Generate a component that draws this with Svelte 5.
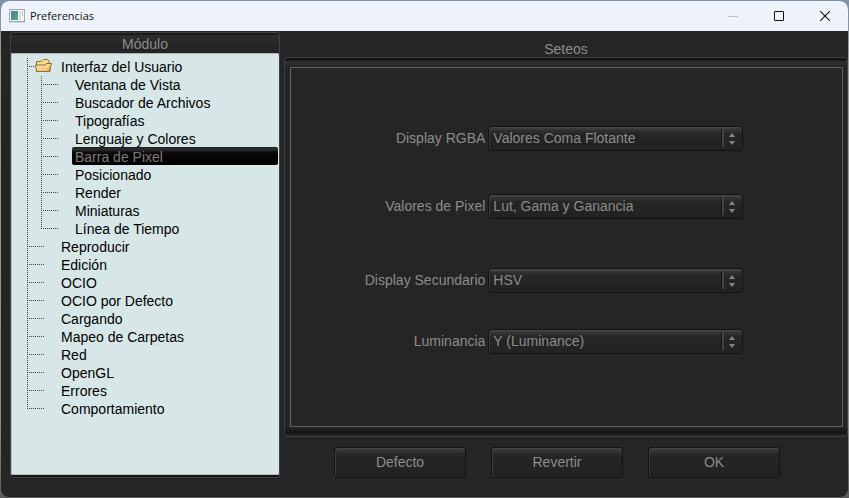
<script>
  const modules = [
    {
      name: 'Interfaz del Usuario',
      children: [
        'Ventana de Vista',
        'Buscador de Archivos',
        'Tipografías',
        'Lenguaje y Colores',
        'Barra de Pixel',
        'Posicionado',
        'Render',
        'Miniaturas',
        'Línea de Tiempo'
      ]
    },
    { name: 'Reproducir' },
    { name: 'Edición' },
    { name: 'OCIO' },
    { name: 'OCIO por Defecto' },
    { name: 'Cargando' },
    { name: 'Mapeo de Carpetas' },
    { name: 'Red' },
    { name: 'OpenGL' },
    { name: 'Errores' },
    { name: 'Comportamiento' }
  ];

  const fields = [
    { id: 'rgba', label: 'Display RGBA', value: 'Valores Coma Flotante' },
    { id: 'values', label: 'Valores de Pixel', value: 'Lut, Gama y Ganancia' },
    { id: 'secondary', label: 'Display Secundario', value: 'HSV' },
    { id: 'luminance', label: 'Luminancia', value: 'Y (Luminance)' }
  ];

  let selected = $state('Barra de Pixel');
</script>

<div class="desktop">
  <div class="window">
    <header>
      <svg class="app" width="16" height="14" viewBox="0 0 16 14" aria-hidden="true">
        <defs>
          <linearGradient id="screen" x1="0" y1="0" x2="1" y2="1">
            <stop offset="0" stop-color="#4b79a8" />
            <stop offset="1" stop-color="#4fae7c" />
          </linearGradient>
        </defs>
        <rect x="0.5" y="0.5" width="15" height="12" fill="#f3f4f5" stroke="#a3a8ad" />
        <path d="M0 13.5H16" stroke="#d0d3d8" />
        <rect x="2" y="2" width="7" height="9" fill="url(#screen)" />
        <rect x="10" y="2" width="2" height="9" fill="#dcdfe2" />
        <rect x="13" y="2" width="1" height="5" fill="#c6cbd0" />
      </svg>
      <h1>Preferencias</h1>
      <button class="caption" aria-label="Minimizar" disabled>
        <svg width="10" height="10" viewBox="0 0 10 10"><path d="M0 5.5H10" stroke="#bcc0c6" /></svg>
      </button>
      <button class="caption" aria-label="Maximizar">
        <svg width="10" height="10" viewBox="0 0 10 10"><rect x="0.5" y="0.5" width="9" height="9" rx="0.5" fill="none" stroke="#111" /></svg>
      </button>
      <button class="caption" aria-label="Cerrar">
        <svg width="10" height="10" viewBox="0 0 10 10"><path d="M0 0L10 10M10 0L0 10" stroke="#111" stroke-width="1.1" /></svg>
      </button>
    </header>

    <div class="body">
      <nav aria-label="Módulo">
        <h2>Módulo</h2>
        <ul class="tree">
          {#each modules as item}
            <li>
              <div class="row">
                <span class="branch" class:parent={item.children}>
                  {#if item.children}
                    <svg width="17" height="14" viewBox="0 0 17 14" aria-hidden="true">
                      <defs>
                        <linearGradient id="folder" x1="0" y1="0" x2="1" y2="1">
                          <stop offset="0" stop-color="#fff3c4" />
                          <stop offset="1" stop-color="#efb24c" />
                        </linearGradient>
                      </defs>
                      <path d="M1.5 12.5V3Q1.500 2.500 2 2.500H6L7.500 1.500L8.500 0.500H12.500L14 2V5H15V12.500Z" fill="#fbdc8e" stroke="#8e6a35" />
                      <path d="M0.500 6H10L11.500 4.500H16.500L14 12.500H1.500Z" fill="url(#folder)" stroke="#8e6a35" />
                    </svg>
                  {/if}
                </span>
                <button class:selected={selected === item.name} onclick={() => (selected = item.name)}>{item.name}</button>
              </div>
              {#if item.children}
                <ul>
                  {#each item.children as child}
                    <li class="row">
                      <span class="branch"></span>
                      <button class:selected={selected === child} onclick={() => (selected = child)}>{child}</button>
                    </li>
                  {/each}
                </ul>
              {/if}
            </li>
          {/each}
        </ul>
      </nav>

      <main>
        <h2>Seteos</h2>
        <div class="frame">
          <form class="panel">
            {#each fields as field}
              <div class="field">
                <label for={field.id}>{field.label}</label>
                <div class="choice">
                  <select id={field.id}>
                    <option>{field.value}</option>
                  </select>
                  <svg width="6" height="12" viewBox="0 0 6 12" aria-hidden="true">
                    <path d="M3 0L6 4H0ZM3 12L6 8H0Z" fill="#858585" />
                  </svg>
                </div>
              </div>
            {/each}
          </form>
        </div>
        <div class="actions">
          <button>Defecto</button>
          <button>Revertir</button>
          <button>OK</button>
        </div>
      </main>
    </div>
  </div>
</div>

<style>
  :global(body) {
    margin: 0;
  }

  * {
    box-sizing: border-box;
  }

  .desktop {
    display: flex;
    min-height: 100vh;
    padding: 1px;
    background: linear-gradient(#7c90a8, #9b9b9b 60px, #8a8a8a 85%, #5c5c5c);
    font: 14px/18px 'Liberation Sans', Arial, sans-serif;
    color: #8c8c8c;
  }

  .window {
    flex: 1;
    display: flex;
    flex-direction: column;
    overflow: hidden;
    border-radius: 8px;
    background: #252525;
  }

  header {
    display: flex;
    align-items: center;
    height: 30px;
    padding-left: 8px;
    background: #eef3fb;
    color: #111;
  }

  h1 {
    flex: 1;
    margin: 0 0 0 5px;
    font: 11px/16px 'Open Sans', 'Noto Sans', sans-serif;
  }

  h2 {
    margin: 0;
    font: inherit;
    text-align: center;
  }

  button {
    padding: 0;
    border: 0;
    background: none;
    color: inherit;
    font: inherit;
  }

  .caption {
    display: flex;
    align-items: center;
    justify-content: center;
    width: 46px;
    height: 30px;
  }

  .body {
    flex: 1;
    display: flex;
    gap: 4px;
    padding-left: 9px;
  }

  nav {
    flex: 0 0 270px;
    display: flex;
    flex-direction: column;
    margin: 1px 0 19px;
    border: 1px solid #414141;
    border-radius: 3px;
    background: linear-gradient(#181818, #181818 1px, #2d2d2d 3px, #252525 12px);
    box-shadow: inset 0 -2px #141414;
    padding-bottom: 2px;
  }

  nav h2 {
    height: 20px;
    line-height: 22px;
  }

  ul {
    margin: 0;
    padding: 0;
    list-style: none;
  }

  .tree {
    flex: 1;
    padding: 4px 0 0 16px;
    border-radius: 2px;
    background: #d7e7e7;
    box-shadow: inset 0 1px #a9b6b6, inset 1px 0 #b4c1c1, inset 0 -1px #b4c1c1;
    color: #000;
  }

  li {
    background: repeating-linear-gradient(#444 0 1px, transparent 1px 2px) 0 1px / 1px 100% no-repeat;
  }

  li:last-child {
    background-size: 1px 9px;
  }

  li ul {
    padding-left: 14px;
  }

  .row {
    display: flex;
    height: 18px;
  }

  .branch {
    flex: 0 0 31px;
    background: repeating-linear-gradient(90deg, #444 0 1px, transparent 1px 2px) 0 9px / 18px 1px no-repeat;
  }

  .branch svg {
    display: block;
    margin: 2px 0 0 8px;
  }

  .parent {
    background-size: 8px 1px;
  }

  .row button {
    flex: 1;
    height: 18px;
    padding: 2px 0 0 3px;
    border-radius: 2px;
    line-height: 16px;
    text-align: left;
    margin-right: 1px;
  }

  .row .selected {
    background: linear-gradient(#1c1c1c, #303030 2px, #080808 6px, #000);
    color: #7a7a7a;
  }

  main {
    flex: 1;
    display: flex;
    flex-direction: column;
  }

  main h2 {
    height: 26px;
    line-height: 36px;
  }

  .frame {
    flex: 1;
    display: flex;
    padding: 9px 4px 9px 5px;
    border: 1px solid #3f3f3f;
    border-radius: 3px;
    background:
      linear-gradient(#141414, #141414 2px, #303030 4px, #252525) top / 100% 9px no-repeat,
      linear-gradient(#252525, #141414 6px, #2b2b2b) bottom / 100% 9px no-repeat;
  }

  .panel {
    flex: 1;
    padding: 58px 99px 0 0;
    border: 1px solid #626262;
    background: #252525;
  }

  .field {
    display: flex;
    gap: 3px;
    margin-bottom: 43px;
  }

  .field:nth-child(2) {
    margin-bottom: 49px;
  }

  .field:nth-child(3) {
    margin-bottom: 36px;
  }

  label {
    flex: 0 0 43%;
    line-height: 25px;
    text-align: right;
  }

  .choice {
    flex: 1;
    position: relative;
  }

  select,
  .actions button {
    border: 1px solid #131313;
    border-radius: 3px;
    background: linear-gradient(#494949, #383838 2px, #2b2b2b 5px, #252525 8px, #222);
    box-shadow: inset 1px 0 #3c3c3c;
  }

  select {
    display: block;
    width: 100%;
    height: 25px;
    padding: 0 24px 2px 4px;
    appearance: none;
    color: inherit;
    font: inherit;
  }

  .choice::after {
    content: '';
    position: absolute;
    top: 3px;
    right: 19px;
    width: 2px;
    height: 18px;
    border-left: 1px solid #151515;
    background: #444;
    pointer-events: none;
  }

  .choice svg {
    position: absolute;
    top: 7px;
    right: 8px;
    pointer-events: none;
  }

  .actions {
    display: flex;
    justify-content: center;
    gap: 25px;
    padding: 10px 18px 19px 0;
  }

  .actions button {
    flex: 0 1 132px;
    height: 31px;
    padding-bottom: 2px;
  }
</style>
